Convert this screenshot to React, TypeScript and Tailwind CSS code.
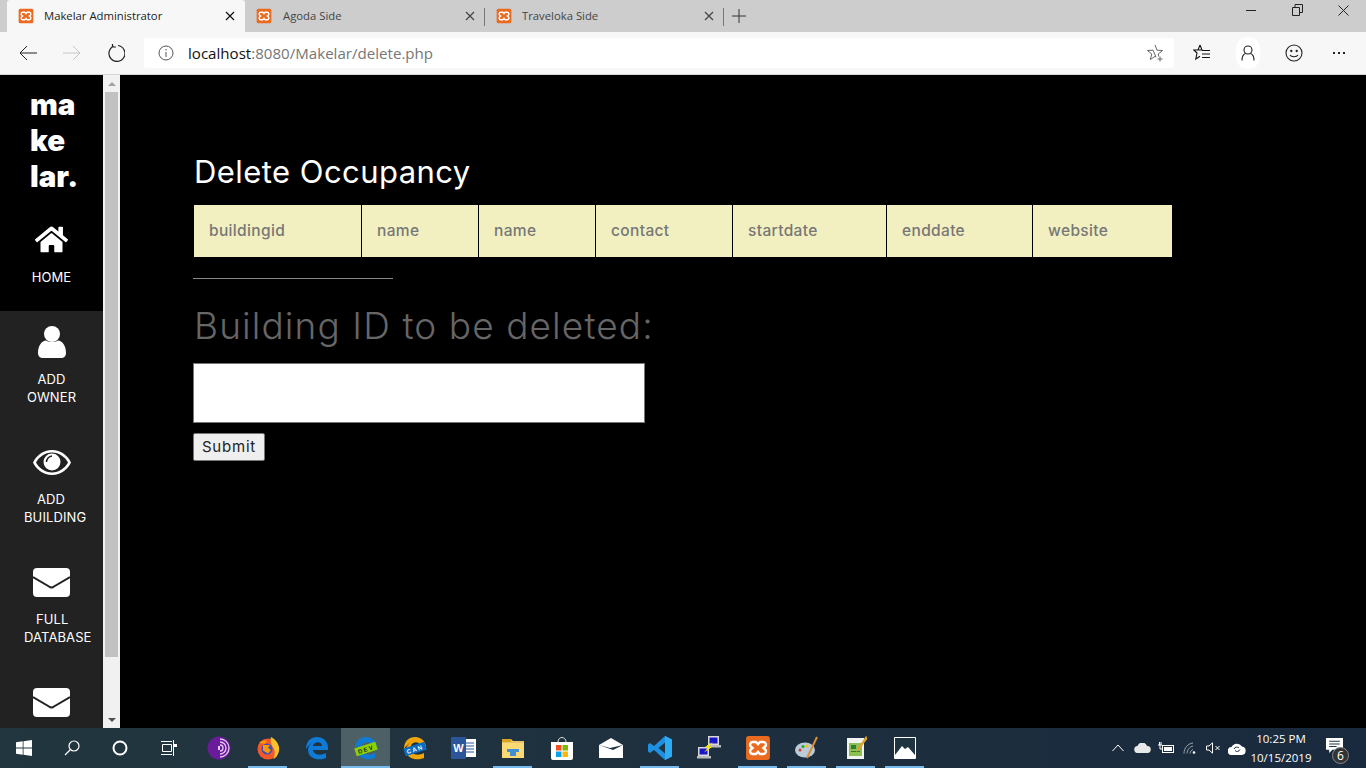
import React from "react";
import { FaHome } from "react-icons/fa";

const ui = { fontFamily: '"Open Sans","Noto Sans",sans-serif' };
const mont = { fontFamily: 'Inter,"Liberation Sans",sans-serif' };

function Xampp({ s = 16 }: { s?: number }) {
  return (
    <svg width={s} height={s} viewBox="0 0 24 24">
      <rect x="1" y="1" width="22" height="22" rx="2.5" fill="#ea6a20" />
      <path d="M7 6.5h3.2l1.8 2 1.8-2H17a2.5 2.5 0 0 1 1.4 4.4L17 12l1.4 1.1A2.5 2.5 0 0 1 17 17.5h-3.2l-1.8-2-1.8 2H7a2.5 2.5 0 0 1-1.4-4.4L7 12l-1.4-1.1A2.5 2.5 0 0 1 7 6.5Z" fill="none" stroke="#fff" strokeWidth="2.2" />
    </svg>
  );
}

function Tab({ title, active, sep, w, gap }: { title: string; active?: boolean; sep?: boolean; w: string; gap: string }) {
  return (
    <div className={`relative flex h-8 items-center ${w} ${active ? "rounded-t-[3px] bg-[#f7f7f7]" : ""}`}>
      <div className="ml-[11px]"><Xampp /></div>
      <span className={`flex-1 text-[11.3px] ${gap} ${active ? "text-[#222]" : "text-[#444]"}`} style={ui}>{title}</span>
      <svg width="10" height="10" viewBox="0 0 10 10" className="mr-[10px]" stroke={active ? "#111" : "#444"} strokeWidth="1.2"><path d="M1 1l8 8M9 1l-8 8" /></svg>
      {sep && <div className="absolute right-0 top-[8px] h-[18px] w-px bg-[#777]" />}
    </div>
  );
}

function Titlebar() {
  return (
    <div className="flex h-8 items-start bg-[#cdcdcd] pl-[7px]">
      <Tab title="Makelar Administrator" active w="w-[238px]" gap="ml-[10px]" />
      <Tab title="Agoda Side" w="w-[240px]" sep gap="ml-[11px]" />
      <Tab title="Traveloka Side" w="w-[239px]" sep gap="ml-[10px]" />
      <svg width="14" height="14" viewBox="0 0 14 14" stroke="#333" strokeWidth="1" className="ml-[8px] mt-[9px]"><path d="M7 0v14M0 7h14" /></svg>
      <div className="ml-auto flex h-5 items-center">
        <div className="flex w-[46px] justify-center"><div className="h-px w-[10px] bg-[#222]" /></div>
        <div className="flex w-[46px] justify-center">
          <svg width="11" height="12" viewBox="0 0 11 12" fill="none" stroke="#222"><path d="M.5 3.5h7v8h-7zM3 3.5v-3h7.5v8h-3" /></svg>
        </div>
        <div className="flex w-[46px] justify-center">
          <svg width="11" height="11" viewBox="0 0 11 11" stroke="#222"><path d="M.5.5l10 10M10.500.5l-10 10" /></svg>
        </div>
      </div>
    </div>
  );
}

function Toolbar() {
  return (
    <div className="flex h-[43px] items-center border-b border-[#d5d5d5] bg-[#f7f7f7]">
      <div className="flex w-[56px] justify-center">
        <svg width="18" height="16" viewBox="0 0 18 16" fill="none" stroke="#222"><path d="M1 8h17M8 1 1 8l7 7" /></svg>
      </div>
      <div className="flex w-[32px] justify-center">
        <svg width="18" height="16" viewBox="0 0 18 16" fill="none" stroke="#c6c6c6"><path d="M0 8h17M10 1l7 7-7 7" /></svg>
      </div>
      <div className="flex w-[56px] justify-center">
        <svg width="18" height="18" viewBox="0 0 18 18" fill="none" stroke="#222" strokeWidth="1.2"><path d="M6.500 2.200A8 8 0 1 0 11 1.500M5.500 0v3h3.500" /></svg>
      </div>
      <div className="flex h-[30px] w-[1030px] items-center rounded-[3px] bg-white">
        <svg width="16" height="16" viewBox="0 0 16 16" fill="none" stroke="#555" className="ml-[14px]"><circle cx="8" cy="8" r="7" /><path d="M8 7v5M8 4v1.500" /></svg>
        <span className="ml-[14px] flex-1 text-[15.1px] text-[#767676]" style={ui}><span className="text-[#111]">localhost</span>:8080/Makelar/delete.php</span>
        <svg width="18" height="18" viewBox="0 0 18 18" fill="none" stroke="#666" className="mr-[10px]"><path d="M9 1 11 6.200 16.600 6.500 12.200 10 12.800 12.500M10 13 9 12.400 4.300 15.500 5.800 10 1.400 6.500 7 6.200Z" /><path d="M14 12.500v5M11.500 15h5" /></svg>
      </div>
      <div className="flex w-[56px] justify-center">
        <svg width="18" height="18" viewBox="0 0 18 18" fill="none" stroke="#111" strokeWidth="1.1"><path d="M7 1 9 6H5.500M7 1 5 6H.8L4 9 2.800 15 7 12.200" /><path d="M9 6.500h8M9 10h8M9 13.500h8" /></svg>
      </div>
      <div className="flex w-[36px] justify-center">
        <div className="flex h-8 w-6 items-center justify-center rounded-full bg-white">
          <svg width="14" height="16" viewBox="0 0 14 16" fill="none" stroke="#222" strokeWidth="1.1"><circle cx="7" cy="5" r="4" /><path d="M1 15.500c0-4 2-6.500 3.500-7M13 15.500c0-4-2-6.500-3.500-7" /></svg>
        </div>
      </div>
      <div className="flex w-[56px] justify-center">
        <svg width="18" height="18" viewBox="0 0 18 18" fill="none" stroke="#222" strokeWidth="1.1"><circle cx="9" cy="9" r="8" /><circle cx="6.300" cy="7" r=".6" fill="#222" /><circle cx="11.700" cy="7" r=".6" fill="#222" /><path d="M5 11c1.200 2.300 6.800 2.300 8 0" /></svg>
      </div>
      <div className="flex w-[34px] justify-center gap-[3px]">
        <i className="h-[2px] w-[2px] bg-[#222]" /><i className="h-[2px] w-[2px] bg-[#222]" /><i className="h-[2px] w-[2px] bg-[#222]" />
      </div>
    </div>
  );
}

function Mail() {
  return (
    <svg width="37" height="29" viewBox="0 0 37 29">
      <rect width="37" height="29" rx="4" fill="#fff" />
      <path d="M0 9 16 18.500a4 4 0 0 0 5 0L37 9" fill="none" stroke="#222" strokeWidth="2" />
    </svg>
  );
}

function NavLabel({ lines, className }: { lines: string[]; className: string }) {
  return (
    <div className={`text-[13px] leading-[18px] tracking-[.1px] text-white ${className}`} style={mont}>
      {lines.map((l) => <div key={l}>{l}</div>)}
    </div>
  );
}

function Sidebar() {
  return (
    <div className="flex w-[120px] shrink-0">
      <div className="h-full w-[103px] overflow-hidden bg-[#222]">
        <div className="h-[236px] bg-black pt-[11px]">
          <div className="pl-[30px] text-[29.500px] font-black leading-[36px] text-white" style={mont}>
            <div>ma</div><div>ke</div><div>lar.</div>
          </div>
          <div className="mt-[29px] flex justify-center"><FaHome className="text-[33px] text-white" /></div>
          <NavLabel lines={["HOME"]} className="mt-[12px] text-center" />
        </div>
        <div className="flex h-[115px] flex-col items-center pt-[15px]">
          <svg width="28" height="32" viewBox="0 0 28 32" fill="#fff"><circle cx="14" cy="8" r="8" /><path d="M0 27c0-8 4-12 8-12.500 3.500 2 8.500 2 12 0 4 .5 8 4.500 8 12.500 0 3-2 5-5 5H5c-3 0-5-2-5-5Z" /></svg>
          <NavLabel lines={["ADD", "OWNER"]} className="mt-[12px] text-center" />
        </div>
        <div className="h-[120px] pt-[24px]">
          <div className="flex justify-center">
            <svg width="38" height="25" viewBox="0 0 38 25"><path d="M19 0C10 0 3 6 0 12.500 3 19 10 25 19 25s16-6 19-12.500C35 6 28 0 19 0Z" fill="#fff" /><path d="M19 2.500C12 2.500 6 7 3 12.500 6 18 12 22.500 19 22.500S32 18 35 12.500C32 7 26 2.500 19 2.500Z" fill="#222" /><circle cx="19" cy="12" r="8.500" fill="#fff" /><path d="M19 6a6 6 0 0 0-5.500 6" fill="none" stroke="#222" strokeWidth="1.500" /></svg>
          </div>
          <NavLabel lines={["ADD", "BUILDING"]} className="mt-[15px] pl-[24px] [&>div:first-child]:pl-[13px]" />
        </div>
        <div className="h-[120px] pt-[22px]">
          <div className="flex justify-center"><Mail /></div>
          <NavLabel lines={["FULL", "DATABASE"]} className="mt-[13px] whitespace-nowrap pl-[24px] [&>div:first-child]:pl-[12px]" />
        </div>
        <div className="pt-[22px]"><div className="flex justify-center"><Mail /></div></div>
      </div>
      <div className="flex h-full w-[17px] flex-col items-center bg-[#f1f1f1]">
        <div className="flex h-[17px] items-center justify-center">
          <div className="h-0 w-0 border-x-[4px] border-b-[4px] border-x-transparent border-b-[#a3a3a3]" />
        </div>
        <div className="h-[565px] w-[13px] bg-[#c1c1c1]" />
        <div className="mt-auto flex h-[17px] items-center justify-center">
          <div className="h-0 w-0 border-x-[4px] border-t-[4px] border-x-transparent border-t-[#505050]" />
        </div>
      </div>
    </div>
  );
}

const cols: [string, string, string][] = [
  ["buildingid", "w-[167px]", ""],
  ["name", "w-[117px]", "border-l border-black"],
  ["name", "w-[117px]", "border-l border-black"],
  ["contact", "w-[137px]", "border-l border-black"],
  ["startdate", "w-[154px]", "border-l border-black"],
  ["enddate", "w-[146px]", "border-l border-black"],
  ["website", "w-[140px]", "border-l border-black"],
];

function Main() {
  return (
    <div className="flex-1 bg-black pl-[73px] pt-[78px]" style={mont}>
      <h1 className="pl-px text-[31px] leading-[38px] tracking-[.44px] text-white">Delete Occupancy</h1>
      <div className="ml-px mt-[14px] flex h-[52px] w-[978px]">
        {cols.map(([c, w, b], i) => (
          <div key={i} className={`flex h-full items-center bg-[#f2f0c0] pl-[15px] text-[15.500px] font-medium tracking-[.35px] text-[#777] ${b} ${w}`}>{c}</div>
        ))}
      </div>
      <div className="mt-[21px] h-px w-[200px] bg-[#888]" />
      <div className="mt-[23px] whitespace-nowrap pl-px text-[37px] font-light leading-[48px] tracking-[1.1px] text-[#666]">Building ID to be deleted:</div>
      <div className="mt-[13px] h-[60px] w-[452px] border border-[#767676] bg-white" />
      <button className="mt-[10px] block h-[28px] w-[72px] rounded-[2px] border border-[#767676] bg-[#efefef] text-[15px] tracking-[.8px] text-[#222]">Submit</button>
    </div>
  );
}

const C = ({ children, a, u }: { children: React.ReactNode; a?: boolean; u?: boolean }) => (
  <div className={`relative flex h-10 w-[49px] items-center justify-center ${a ? "bg-[#4d6066]" : ""}`}>
    {children}
    {u && <div className={`absolute bottom-0 h-[2px] bg-[#76b9ed] ${a ? "inset-x-0" : "inset-x-[5px]"}`} />}
  </div>
);

function EdgeE({ color = "#0f7bd6", band, text }: { color?: string; band?: string; text?: string }) {
  return (
    <svg width="26" height="26" viewBox="0 0 26 26">
      <path d="M2 14C2 6 7 2 13 2c7 0 11 5 11 11v2H9c.5 5 8 6 13 3v5c-7 3-18 1-18-8 0-3 2-6 5-8-3 2-5 4-7 7Zm7-3h9c0-5-8-5-9 0Z" fill={color} />
      {band && <g transform="rotate(-18 13 14)"><rect x="2" y="10" width="22" height="8" fill={band} /><text x="13" y="16.500" textAnchor="middle" fontSize="6" fontWeight="700" fill={text} letterSpacing="1.500" fontFamily="Liberation Sans">{band === "#8ed100" ? "DEV" : "CAN"}</text></g>}
    </svg>
  );
}

function Taskbar() {
  return (
    <div className="flex h-10 items-center bg-gradient-to-r from-[#22363f] to-[#1a2a3e]">
      <div className="flex h-10 w-12 items-center justify-center">
        <svg width="16" height="16" viewBox="0 0 16 16" fill="#fff"><path d="M0 2.300 6.700 1.300v6.300H0zM7.500 1.200 16 0v7.600H7.500zM0 8.400h6.700v6.300L0 13.700zM7.500 8.400H16V16l-8.500-1.200z" /></svg>
      </div>
      <div className="flex h-10 w-12 items-center justify-center">
        <svg width="16" height="16" viewBox="0 0 16 16" fill="none" stroke="#fff" strokeWidth="1.200"><circle cx="10" cy="6" r="5" /><path d="M6.500 9.500 1 15" /></svg>
      </div>
      <div className="flex h-10 w-12 items-center justify-center">
        <svg width="16" height="16" viewBox="0 0 16 16" fill="none" stroke="#fff" strokeWidth="2"><circle cx="8" cy="8" r="6.500" /></svg>
      </div>
      <div className="mr-[2px] flex h-10 w-12 items-center justify-center">
        <svg width="17" height="16" viewBox="0 0 17 16" fill="none" stroke="#fff"><path d="M2.500 4.500h9v7h-9zM1 1.500h11M1 14.500h11M13.500 0v16" /><rect x="14" y="4" width="3" height="3" fill="#fff" stroke="none" /></svg>
      </div>
      <C><svg width="24" height="24" viewBox="0 0 24 24"><circle cx="12" cy="12" r="11.500" fill="#6a1b9a" /><path d="M13 6a6 6 0 0 1 0 12M13 9a3 3 0 0 1 0 6M13 3a9 9 0 0 1 0 18" fill="none" stroke="#e5c8f2" strokeWidth="1.300" /><path d="M11 10h2v4h-2z" fill="#e5c8f2" /></svg></C>
      <C u><svg width="24" height="24" viewBox="0 0 24 24"><circle cx="12" cy="13" r="10.500" fill="#f4572a" /><path d="M15 1c6 3 9 9 8 14-1 4-3 7-6 8 3-5 2-10-1-13-1-3-2-6-1-9Z" fill="#fbc02d" /><path d="M3 7c2-2 5-3 8-2l-2 3z" fill="#ff9800" /><circle cx="11" cy="13" r="5.500" fill="#3f51b5" /><path d="M7 9h7l-2 3 3 2-3 3.500-5-3Z" fill="#ff9800" /></svg></C>
      <C><EdgeE /></C>
      <C a u><EdgeE band="#8ed100" text="#123" /></C>
      <C><EdgeE color="#f2a60c" band="#0b6cc0" text="#fff" /></C>
      <C><svg width="26" height="24" viewBox="0 0 26 24"><rect x="8" y="3" width="17" height="18" fill="#fff" /><path d="M14 7h9M14 10h9M14 13h9M14 16h9" stroke="#2b579a" /><rect y="1" width="15" height="22" rx="1" fill="#2b579a" /><text x="7.500" y="16" textAnchor="middle" fontSize="11" fontWeight="700" fill="#fff" fontFamily="Liberation Sans">W</text></svg></C>
      <C u><svg width="22" height="20" viewBox="0 0 22 20"><path d="M0 1h9l2 2h11v17H0z" fill="#e9c46a" /><path d="M0 1h9v3H0z" fill="#d9a520" /><path d="M0 5h22v15H0z" fill="#fbd975" /><path d="M5 11h12v3h-3v4H8v-4H5z" fill="#3f8fd2" /></svg></C>
      <C><svg width="24" height="24" viewBox="0 0 24 24"><path d="M8 6c0-6 8-6 8 0" fill="none" stroke="#ddd" strokeWidth="1" /><path d="M1 6h22v16a2 2 0 0 1-2 2H3a2 2 0 0 1-2-2z" fill="#fff" /><rect x="6" y="9" width="5.500" height="5.500" fill="#f25022" /><rect x="12.500" y="9" width="5.500" height="5.500" fill="#7fba00" /><rect x="6" y="15.500" width="5.500" height="5.500" fill="#00a4ef" /><rect x="12.500" y="15.500" width="5.500" height="5.500" fill="#ffb900" /></svg></C>
      <C><svg width="24" height="20" viewBox="0 0 24 20"><path d="M0 7 12 0l12 7v13H0z" fill="#fff" /><path d="M0 7l14 5 10-5-13 3z" fill="#1f3440" /></svg></C>
      <C u><svg width="24" height="24" viewBox="0 0 24 24"><path d="M17 0 24 3.500v17L17 24 6 14l-4 3-2-1.500V8.500L2 7l4 3z" fill="#1f8fe0" /><path d="M17 6.500 10.500 12l6.500 5.500z" fill="#1f3440" /><path d="M17 0v24l7-3.500v-17z" fill="#2bacf5" /></svg></C>
      <C><svg width="24" height="24" viewBox="0 0 24 24"><path d="M11 0h11v9H11z" fill="#d8d8d8" /><rect x="12.500" y="1.500" width="8" height="6" fill="#1616c8" /><path d="M10 9h14v2.500H10z" fill="#bbb" /><path d="M1 11h11v9H1z" fill="#d8d8d8" /><rect x="2.500" y="12.500" width="8" height="6" fill="#1616c8" /><path d="M0 20h14v2.500H0z" fill="#bbb" /><path d="M16 6 8 11l3 .5-4 5 8-5.500-3-.5z" fill="#ffe600" /></svg></C>
      <C u><Xampp s={26} /></C>
      <C u><svg width="24" height="24" viewBox="0 0 24 24"><ellipse cx="10" cy="14" rx="10" ry="7.500" fill="#b9ccd8" /><circle cx="5" cy="14" r="1.500" fill="#d33" /><circle cx="8" cy="10.500" r="1.500" fill="#2a2" /><circle cx="12" cy="10" r="1.500" fill="#fb0" /><path d="M22 1 12 22" stroke="#d98e3a" strokeWidth="2" /></svg></C>
      <C u><svg width="22" height="24" viewBox="0 0 22 24"><path d="M2 2h17v21H2z" fill="#f2f2f2" /><path d="M4 7h13v13H4z" fill="#8cc152" /><path d="M6 9h5v4H6zM6 15h9v1H6z" fill="#2e7d32" /><path d="M21 0l-9 13-1 3 3-2 9-12z" fill="#e0a030" /></svg></C>
      <C u><svg width="22" height="22" viewBox="0 0 22 22"><path d="M.5.500h21v21H.5z" fill="#1f3440" stroke="#fff" /><path d="M1 18l7-9 3 3 3-2 7 8v3H1z" fill="#fff" /></svg></C>
      <div className="ml-auto flex h-10 items-center text-white">
        <div className="flex w-[24px] justify-center"><svg width="12" height="8" viewBox="0 0 12 8" fill="none" stroke="#fff"><path d="M.5 7 6 1l5.500 6" /></svg></div>
        <div className="flex w-[24px] justify-center"><svg width="17" height="10" viewBox="0 0 17 10" fill="#e8e8e8"><path d="M4 10a3.500 3.500 0 0 1-.5-7A5 5 0 0 1 13 3a3.500 3.500 0 0 1 .5 7z" /></svg></div>
        <div className="flex w-[24px] justify-center"><svg width="16" height="12" viewBox="0 0 16 12" fill="none" stroke="#fff"><rect x="4.500" y="3.500" width="11" height="7" /><rect x="6" y="5" width="8" height="4" fill="#fff" stroke="none" /><path d="M0 3h4M1.500 0v3M3 0v3M2 3v4h3" /></svg></div>
        <div className="flex w-[24px] justify-center"><svg width="14" height="12" viewBox="0 0 14 12" fill="none" stroke="#9aa6ad"><path d="M1 11.500C1 6 5 1.500 10 1M4 11.500C4 8 7 4.500 10 4M7 11.500C7 9.500 8.500 8 10 7.500" /><circle cx="11" cy="10.500" r="1.300" fill="#fff" stroke="none" /></svg></div>
        <div className="flex w-[22px] justify-center"><svg width="15" height="12" viewBox="0 0 15 12" fill="none" stroke="#fff"><path d="M.5 4h2.500L6.500.8v10.400L3 8H.5zM9.500 4l4 4M13.500 4l-4 4" /></svg></div>
        <div className="flex w-[26px] justify-center"><svg width="18" height="13" viewBox="0 0 18 13" fill="#fff"><path d="M4 13a4 4 0 0 1-.5-8A6 6 0 0 1 14 4.500 4.300 4.300 0 0 1 14 13z" /><path d="M6 7a3 3 0 0 1 5-1M12 7.500a3 3 0 0 1-5 1" fill="none" stroke="#1f3440" /></svg></div>
        <div className="w-[62px] text-center text-[11.500px] leading-[19px] text-white" style={ui}><div>10:25 PM</div><div>10/15/2019</div></div>
        <div className="relative flex h-10 w-[44px] items-center justify-center">
          <svg width="17" height="15" viewBox="0 0 16 14" className="-mt-[6px]"><path d="M0 0h16v11H6l-3 3v-3H0z" fill="#fff" /><path d="M3 3h10M3 5.500h10M3 8h7" stroke="#1f3440" /></svg>
          <div className="absolute left-[20px] top-[19px] flex h-[17px] w-[17px] items-center justify-center rounded-full border border-[#888] bg-[#333] text-[12px] text-white" style={ui}>6</div>
        </div>
        <div className="w-[10px]" />
      </div>
    </div>
  );
}

export default function App() {
  return (
    <div className="flex h-[768px] w-[1366px] flex-col overflow-hidden bg-black">
      <Titlebar />
      <Toolbar />
      <div className="flex h-[653px]">
        <Sidebar />
        <Main />
      </div>
      <Taskbar />
    </div>
  );
}
